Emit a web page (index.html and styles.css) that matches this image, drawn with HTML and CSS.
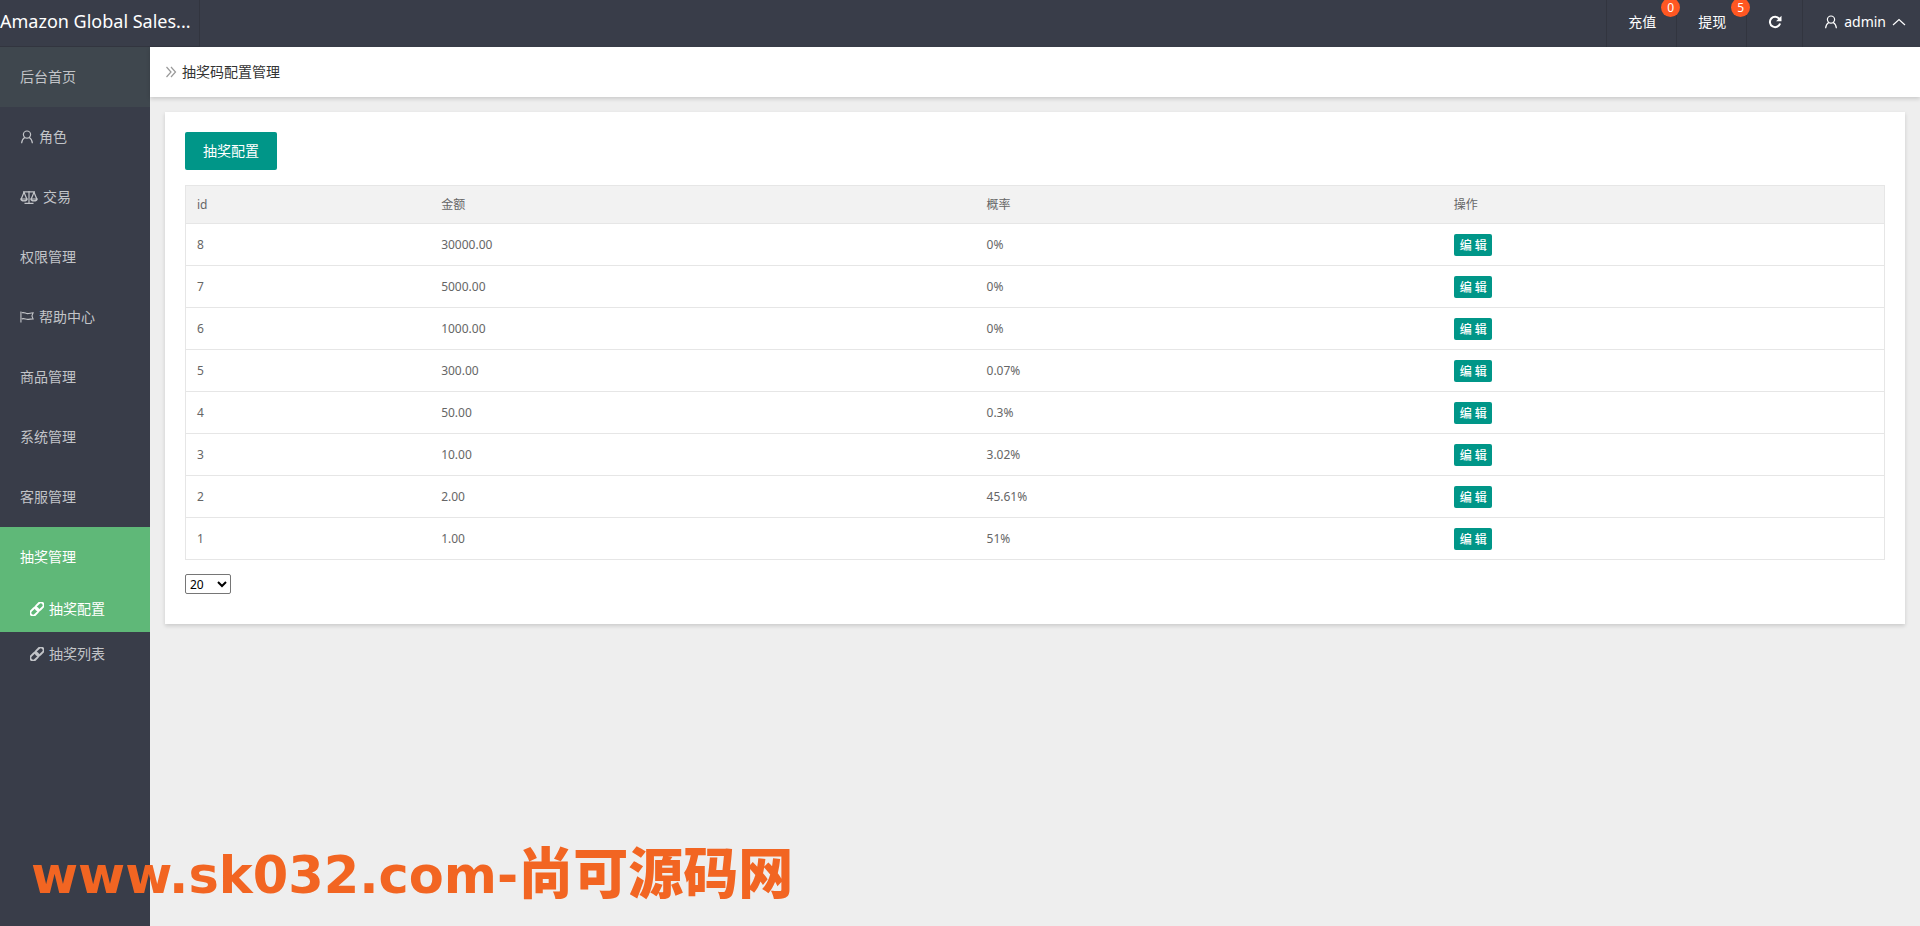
FILE: index.html
```html
<!DOCTYPE html>
<html lang="zh-CN">
<head>
<meta charset="utf-8">
<title>抽奖码配置管理</title>
<link rel="stylesheet" href="styles.css">
</head>
<body>
<svg class="defs" aria-hidden="true">
  <symbol id="user" viewBox="0 0 14 14"><path d="M7 1a3.4 3.4 0 1 1 0 7.2A3.4 3.4 0 1 1 7 1zM4.8 7.6C2.9 8.700 1.800 10.600 1.600 13.300M9.200 7.600c1.900 1.100 3 3 3.200 5.700"/></symbol>
  <symbol id="scale" viewBox="0 0 18 14"><path d="M9 1v12M4.500 13.300h9M3 1.800h12M4 2.200L1.200 9M4 2.200L6.800 9M14 2.200L11.200 9M14 2.200L16.800 9M.8 9h6.400c-.6 2.600-5.800 2.600-6.400 0zM10.800 9h6.400c-.6 2.600-5.800 2.600-6.400 0z"/></symbol>
  <symbol id="flag" viewBox="0 0 15 14"><path d="M1 1v12M2 2.500c2.500-1 4 .9 6.200.9 2 0 3.500-.9 5.800-.9l-1.200 3.300L14 9c-2.300 0-3.800.6-5.800.6C6 9.600 4.500 8 2 9"/></symbol>
  <symbol id="link" viewBox="0 0 14 14"><g transform="rotate(-45 7 7)"><rect x="-1.200" y="4.200" width="9" height="5.600" rx="2.800"/><rect x="6.200" y="4.200" width="9" height="5.600" rx="2.800"/></g></symbol>
  <symbol id="refresh" viewBox="0 0 14 14"><path d="M11.300 3.800A5.200 5.200 0 1 0 12.100 8.500" /><path class="solid" d="M13.500.8v5.400H8.100z"/></symbol>
  <symbol id="up" viewBox="0 0 14 14"><path d="M1 10L7 4.500 13 10"/></symbol>
  <symbol id="crumb" viewBox="0 0 12 12"><path d="M1.500 1L6 6l-4.500 5M6 1l4.500 5L6 11"/></symbol>
</svg>

<header class="header">
  <div class="logo">Amazon Global Sales...</div>
  <nav class="tools">
    <a class="tool" href="#">充值<span class="badge">0</span></a>
    <a class="tool" href="#">提现<span class="badge">5</span></a>
    <a class="tool" href="#" aria-label="刷新"><svg class="icon icon-bold"><use href="#refresh"/></svg></a>
    <a class="tool tool-user" href="#"><svg class="icon"><use href="#user"/></svg><span>admin</span><svg class="icon"><use href="#up"/></svg></a>
  </nav>
</header>

<div class="body">
  <nav class="side">
    <a class="item item-home" href="#">后台首页</a>
    <a class="item" href="#"><svg class="icon"><use href="#user"/></svg>角色</a>
    <a class="item" href="#"><svg class="icon icon-wide"><use href="#scale"/></svg>交易</a>
    <a class="item" href="#">权限管理</a>
    <a class="item" href="#"><svg class="icon"><use href="#flag"/></svg>帮助中心</a>
    <a class="item" href="#">商品管理</a>
    <a class="item" href="#">系统管理</a>
    <a class="item" href="#">客服管理</a>
    <a class="item active" href="#">抽奖管理</a>
    <a class="item sub active" href="#"><svg class="icon icon-bold"><use href="#link"/></svg>抽奖配置</a>
    <a class="item sub" href="#"><svg class="icon icon-bold"><use href="#link"/></svg>抽奖列表</a>
  </nav>

  <main class="main">
    <h1 class="crumb"><svg class="icon"><use href="#crumb"/></svg>抽奖码配置管理</h1>
    <section class="card">
      <button class="btn" type="button">抽奖配置</button>
      <table class="table">
        <colgroup><col class="c-id"><col class="c-sum"><col class="c-rate"><col></colgroup>
        <thead><tr><th>id</th><th>金额</th><th>概率</th><th>操作</th></tr></thead>
        <tbody>
          <tr><td>8</td><td>30000.00</td><td>0%</td><td><button class="edit" type="button">编 辑</button></td></tr>
          <tr><td>7</td><td>5000.00</td><td>0%</td><td><button class="edit" type="button">编 辑</button></td></tr>
          <tr><td>6</td><td>1000.00</td><td>0%</td><td><button class="edit" type="button">编 辑</button></td></tr>
          <tr><td>5</td><td>300.00</td><td>0.07%</td><td><button class="edit" type="button">编 辑</button></td></tr>
          <tr><td>4</td><td>50.00</td><td>0.3%</td><td><button class="edit" type="button">编 辑</button></td></tr>
          <tr><td>3</td><td>10.00</td><td>3.02%</td><td><button class="edit" type="button">编 辑</button></td></tr>
          <tr><td>2</td><td>2.00</td><td>45.61%</td><td><button class="edit" type="button">编 辑</button></td></tr>
          <tr><td>1</td><td>1.00</td><td>51%</td><td><button class="edit" type="button">编 辑</button></td></tr>
        </tbody>
      </table>
      <select class="size" aria-label="每页条数"><option>20</option><option>50</option></select>
    </section>
  </main>
</div>

<div class="mark">www.sk032.com-<span class="mark-cn">尚可源码网</span></div>
</body>
</html>
```

FILE: styles.css
```css
* { box-sizing: border-box; }

body {
  display: flex;
  flex-direction: column;
  min-height: 100vh;
  margin: 0;
  background: #eee;
  color: #333;
  font: 14px/20px "Noto Sans", "Noto Sans CJK SC", sans-serif;
}

a { color: inherit; text-decoration: none; }
button, select { font-family: inherit; }

.defs { display: none; }

.icon {
  flex: none;
  width: 14px;
  height: 14px;
  overflow: visible;
  fill: none;
  stroke: currentColor;
  stroke-width: 1.2;
}
.icon-bold { stroke-width: 2; }
.icon-wide { width: 18px; }
.solid { fill: currentColor; stroke: none; }

.header {
  display: flex;
  justify-content: space-between;
  height: 47px;
  background: #393d49;
  color: #fff;
}

.logo {
  width: 200px;
  border-right: 1px solid #32353f;
  border-bottom: 1px solid #32353f;
  font-size: 18px;
  line-height: 43px;
  white-space: nowrap;
}

.tools { display: flex; }

.tool {
  position: relative;
  display: flex;
  align-items: center;
  gap: 6px;
  padding: 0 20px 4px 21px;
  border-left: 1px solid #32353f;
}
.tool-user { padding-right: 14px; }

.badge {
  position: absolute;
  top: -2px;
  right: -4px;
  z-index: 1;
  width: 19px;
  height: 19px;
  border-radius: 50%;
  background: #ff5722;
  font-size: 12px;
  line-height: 19px;
  text-align: center;
}

.body { display: flex; flex: 1; }

.side {
  flex: none;
  width: 150px;
  background: #393d49;
}

.item {
  display: flex;
  align-items: center;
  gap: 5px;
  height: 60px;
  padding: 0 0 1px 20px;
  color: #c2c4c8;
}
.item-home { background: #3f474e; }
.sub { height: 45px; padding-left: 30px; }
.active { background: #5fb878; color: #fff; }

.main { flex: 1; }

.crumb {
  display: flex;
  align-items: center;
  gap: 5px;
  height: 50px;
  margin: 0;
  padding-left: 15px;
  background: #fff;
  box-shadow: 0 2px 4px rgba(0, 0, 0, .15);
  font-size: 14px;
  font-weight: 400;
}
.crumb .icon { width: 12px; color: #999; }

.card {
  margin: 15px;
  padding: 20px 20px 30px;
  background: #fff;
  box-shadow: 0 2px 4px rgba(0, 0, 0, .15);
}

.btn {
  display: block;
  height: 38px;
  padding: 0 18px 2px;
  border: 0;
  border-radius: 2px;
  background: #009688;
  color: #fff;
  font-size: 14px;
}

.table {
  width: 100%;
  margin: 15px 0 14px;
  border: 1px solid #e6e6e6;
  border-collapse: collapse;
  table-layout: fixed;
  color: #666;
  font-size: 12px;
}
.c-id { width: 14.4%; }
.c-sum { width: 32.1%; }
.c-rate { width: 27.5%; }

.table th, .table td {
  padding: 9px 11px 8px;
  border-bottom: 1px solid #e6e6e6;
  font-weight: 400;
  text-align: left;
}
.table th { background: #f2f2f2; }
.table td { padding: 10px 11px 9px; }

.edit {
  display: block;
  height: 22px;
  padding: 0 5px 0 6px;
  border: 0;
  border-radius: 2px;
  background: #009688;
  color: #fff;
  font-size: 12px;
  font-weight: 500;
}

.size {
  display: block;
  width: 46px;
  height: 20px;
  padding: 0;
  border: 1px solid #767676;
  border-radius: 2px;
  background: #fff;
  color: #000;
  font-size: 12px;
}

.mark {
  position: fixed;
  bottom: 20px;
  left: 31px;
  color: #f26522;
  font: bold 51px/60px "DejaVu Sans", sans-serif;
  white-space: nowrap;
}
.mark-cn {
  font-family: "Noto Sans CJK SC", sans-serif;
  font-size: 55px;
  font-weight: 900;
}
```
